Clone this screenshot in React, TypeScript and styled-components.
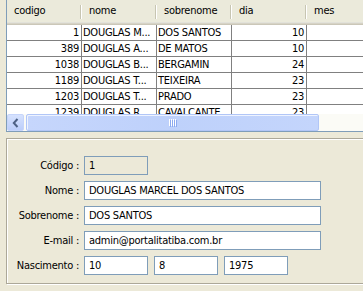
import React from "react";
import styled, { createGlobalStyle } from "styled-components";

const GlobalStyle = createGlobalStyle`
  html, body { margin: 0; padding: 0; }
  body {
    background: #ece9d8;
    overflow: hidden;
    width: 363px;
    height: 291px;
    font-family: "DejaVu Sans Condensed", "DejaVu Sans", sans-serif;
    font-stretch: condensed;
    font-size: 11px;
    letter-spacing: -0.25px;
    color: #000;
  }
  * { box-sizing: border-box; }
`;

const Page = styled.div`
  width: 363px;
  height: 291px;
  overflow: hidden;
  padding-left: 6px;
  display: flex;
  flex-direction: column;
  gap: 6px;
`;

const ScrollPane = styled.div`
  width: 420px;
  flex: none;
  border: 1px solid #7f9db9;
  border-top: none;
  background: #fff;
  display: flex;
  flex-direction: column;
`;

const Header = styled.div`
  display: flex;
  height: 25px;
  background: #ebeadb;
  box-shadow: inset 0 -1px #cbc7b8, inset 0 -2px #d6d3c6, inset 0 -3px #e2e2da;
`;

const HeaderCell = styled.div`
  position: relative;
  flex: none;
  width: 75px;
  padding-left: 7px;
  line-height: 22px;
  white-space: nowrap;
  &::after {
    content: "";
    position: absolute;
    right: 1px;
    top: 5px;
    width: 1px;
    height: 14px;
    background: #c7c5b2;
    box-shadow: 1px 0 #fff;
  }
`;

const Viewport = styled.div`
  height: 89px;
  overflow: hidden;
`;

const Row = styled.div`
  display: flex;
  height: 16px;
`;

const Cell = styled.div<{ $right?: boolean }>`
  flex: none;
  width: 75px;
  height: 16px;
  border-right: 1px solid #808080;
  border-bottom: 1px solid #808080;
  padding: 0 2px 0 1px;
  line-height: 15px;
  white-space: nowrap;
  overflow: hidden;
  text-align: ${(p) => (p.$right ? "right" : "left")};
`;

const HScroll = styled.div`
  display: flex;
  height: 17px;
  background: #fbfbf6;
  gap: 2px;
`;

const ArrowButton = styled.div`
  flex: none;
  width: 17px;
  height: 17px;
  border-radius: 2px;
  border: 1px solid #c6d5fb;
  background: linear-gradient(#d6e2fe, #bccefa);
  display: flex;
  align-items: center;
  justify-content: center;
`;

const Thumb = styled.div`
  flex: none;
  width: 293px;
  height: 17px;
  border-radius: 2px;
  border: 1px solid #b1c6f7;
  box-shadow: inset 1px 1px #eef3ff;
  background: linear-gradient(90deg, #c6d6fc, #bed1fb 50%, #c4d5fc);
  display: flex;
  align-items: center;
  justify-content: center;
`;

const Panel = styled.div`
  width: 420px;
  flex: none;
  border: 1px solid #aca899;
  box-shadow: inset 1px 1px #fff, 1px 1px #fff;
  padding: 17px 0 8px 0;
  display: flex;
  flex-direction: column;
  gap: 6px;
`;

const FormRow = styled.div`
  display: flex;
  align-items: center;
  gap: 5px;
  height: 19px;
`;

const Label = styled.div`
  flex: none;
  width: 72px;
  text-align: right;
  white-space: nowrap;
`;

const FieldGroup = styled.div`
  display: flex;
  gap: 6px;
`;

const Field = styled.div<{ $w: number; $readOnly?: boolean }>`
  flex: none;
  width: ${(p) => p.$w}px;
  height: 19px;
  border: 1px solid #7f9db9;
  background: ${(p) => (p.$readOnly ? "#ece9d8" : "#fff")};
  padding-left: 4px;
  line-height: 17px;
  white-space: nowrap;
  overflow: hidden;
`;

const columns = ["codigo", "nome", "sobrenome", "dia", "mes"];
const rows: [string, string, string, string][] = [
  ["1", "DOUGLAS M...", "DOS SANTOS", "10"],
  ["389", "DOUGLAS A...", "DE MATOS", "10"],
  ["1038", "DOUGLAS B...", "BERGAMIN", "24"],
  ["1189", "DOUGLAS T...", "TEIXEIRA", "23"],
  ["1203", "DOUGLAS T...", "PRADO", "23"],
  ["1239", "DOUGLAS R...", "CAVALCANTE", "23"],
];

const LeftChevron = () => (
  <svg width="8" height="10" viewBox="0 0 8 10">
    <path d="M5.5 1 L1.8 5 L5.5 9" fill="none" stroke="#4d6185" strokeWidth="2" />
  </svg>
);

const Grip = () => (
  <svg width="8" height="8" viewBox="0 0 8 8">
    {[0, 2, 4, 6].map((x) => (
      <g key={x}>
        <rect x={x} y={0} width={1} height={7} fill="#fff" />
        <rect x={x + 1} y={1} width={1} height={7} fill="#8caaf0" />
      </g>
    ))}
  </svg>
);

export default function App() {
  return (
    <>
      <GlobalStyle />
      <Page>
        <ScrollPane>
          <Header>
            {columns.map((c) => (
              <HeaderCell key={c}>{c}</HeaderCell>
            ))}
          </Header>
          <Viewport>
            {rows.map((r, i) => (
              <Row key={i}>
                <Cell $right>{r[0]}</Cell>
                <Cell>{r[1]}</Cell>
                <Cell>{r[2]}</Cell>
                <Cell $right>{r[3]}</Cell>
                <Cell />
              </Row>
            ))}
          </Viewport>
          <HScroll>
            <ArrowButton>
              <LeftChevron />
            </ArrowButton>
            <Thumb>
              <Grip />
            </Thumb>
          </HScroll>
        </ScrollPane>
        <Panel>
          <FormRow>
            <Label>Código :</Label>
            <Field $w={64} $readOnly>1</Field>
          </FormRow>
          <FormRow>
            <Label>Nome :</Label>
            <Field $w={237}>DOUGLAS MARCEL DOS SANTOS</Field>
          </FormRow>
          <FormRow>
            <Label>Sobrenome :</Label>
            <Field $w={237}>DOS SANTOS</Field>
          </FormRow>
          <FormRow>
            <Label>E-mail :</Label>
            <Field $w={237}>admin@portalitatiba.com.br</Field>
          </FormRow>
          <FormRow>
            <Label>Nascimento :</Label>
            <FieldGroup>
              <Field $w={64}>10</Field>
              <Field $w={64}>8</Field>
              <Field $w={64}>1975</Field>
            </FieldGroup>
          </FormRow>
        </Panel>
      </Page>
    </>
  );
}
